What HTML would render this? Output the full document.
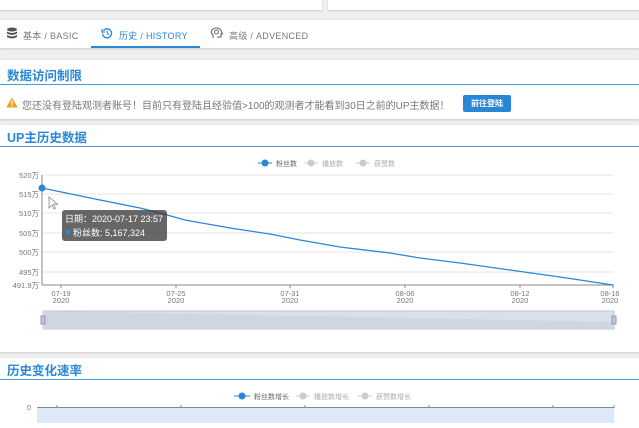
<!DOCTYPE html>
<html><head><meta charset="utf-8"><style>
*{margin:0;padding:0;box-sizing:border-box}
body{width:639px;height:423px;background:#efefef;position:relative;overflow:hidden;font-family:"Liberation Sans","Noto Sans CJK SC",sans-serif}
.abs{position:absolute}
.card{position:absolute;background:#fff;box-shadow:0 1px 2px rgba(0,0,0,.15)}
.title{position:absolute;left:7px;font-size:12.5px;font-weight:bold;color:#2a87d6}
.line{position:absolute;left:0;right:0;height:1px;background:#4a9be0}
.tab{position:absolute;top:29px;font-size:9px;color:#777;letter-spacing:.3px}
</style></head><body>
<div class="card" style="left:0;top:0;width:322px;height:10px"></div>
<div class="card" style="left:328px;top:0;width:311px;height:10px"></div>

<div class="card" style="left:0;top:20px;width:639px;height:28px"></div>
<svg class="abs" style="left:6px;top:27px" width="12" height="12" viewBox="0 0 12 12"><g fill="#555"><ellipse cx="6" cy="2.5" rx="5" ry="2"/><path d="M1 4.5q5 3 10 0v2q-5 3-10 0z"/><path d="M1 8q5 3 10 0v2q-5 3-10 0z"/></g></svg>
<div class="tab" style="left:23px">基本 / BASIC</div>
<svg class="abs" style="left:101px;top:27px" width="12" height="12" viewBox="0 0 12 12"><path d="M2.5 3.5A4.5 4.5 0 1 1 1.5 6.5" fill="none" stroke="#2a87d6" stroke-width="1.3"/><path d="M1 2v3h3" fill="none" stroke="#2a87d6" stroke-width="1.2"/><path d="M6.2 3.5v3l2 1.3" fill="none" stroke="#2a87d6" stroke-width="1.1"/></svg>
<div class="tab" style="left:119px;color:#2a87d6">历史 / HISTORY</div>
<div class="abs" style="left:91px;top:46px;width:109px;height:2px;background:#2a87d6"></div>
<svg class="abs" style="left:210px;top:27px" width="13" height="12" viewBox="0 0 13 12"><path d="M3 11V8Q1 6.5 1.5 4Q2.5 1 6.5 1Q11 1 11.5 5L12.5 7H11V10H8V11" fill="none" stroke="#666" stroke-width="1.1"/><circle cx="6.5" cy="5" r="2" fill="none" stroke="#666"/></svg>
<div class="tab" style="left:229px">高级 / ADVENCED</div>

<div class="card" style="left:0;top:60px;width:639px;height:59px">
<div class="title" style="top:5px">数据访问制限</div>
<div class="line" style="top:24px"></div>
<svg class="abs" style="left:6px;top:37px" width="12" height="11" viewBox="0 0 12 11"><path d="M6 0.5L11.7 10.5H0.3z" fill="#f0a020"/><rect x="5.4" y="3.5" width="1.2" height="4" fill="#fff"/><rect x="5.4" y="8.3" width="1.2" height="1.2" fill="#fff"/></svg>
<div class="abs" style="left:22px;top:37px;font-size:10px;color:#777;white-space:nowrap">您还没有登陆观测者账号！目前只有登陆且经验值&gt;100的观测者才能看到30日之前的UP主数据！</div>
<div class="abs" style="left:463px;top:35px;width:48px;height:17px;background:#2a87d6;border-radius:2px;color:#fff;font-size:8px;font-weight:bold;text-align:center;line-height:17px">前往登陆</div>
</div>

<div class="card" style="left:0;top:125px;width:639px;height:227px">
<div class="title" style="top:2px">UP主历史数据</div>
<div class="line" style="top:21px"></div>
</div>
<svg class="abs" style="left:0;top:150px" width="639" height="200" font-family="Liberation Sans,Noto Sans CJK SC,sans-serif">
<g font-size="7" fill="#aaa">
<line x1="258" y1="13" x2="272" y2="13" stroke="#2a87d6"/><circle cx="265" cy="13" r="3.5" fill="#2a87d6"/><text x="276" y="16" fill="#666">粉丝数</text>
<line x1="304" y1="13" x2="318" y2="13" stroke="#ccc"/><circle cx="311" cy="13" r="3.5" fill="#ccc"/><text x="322" y="16">播放数</text>
<line x1="356" y1="13" x2="370" y2="13" stroke="#ccc"/><circle cx="363" cy="13" r="3.5" fill="#ccc"/><text x="374" y="16">获赞数</text>
</g>
<g stroke="#e6e6e6"><line x1="42" y1="25" x2="613" y2="25"/><line x1="42" y1="44" x2="613" y2="44"/><line x1="42" y1="63" x2="613" y2="63"/><line x1="42" y1="83" x2="613" y2="83"/><line x1="42" y1="102" x2="613" y2="102"/><line x1="42" y1="122" x2="613" y2="122"/></g>
<line x1="42" y1="25" x2="42" y2="135" stroke="#888"/><line x1="42" y1="135" x2="614" y2="135" stroke="#888"/>
<g stroke="#888"><line x1="61" y1="135" x2="61" y2="138"/><line x1="176" y1="135" x2="176" y2="138"/><line x1="290" y1="135" x2="290" y2="138"/><line x1="405" y1="135" x2="405" y2="138"/><line x1="520" y1="135" x2="520" y2="138"/><line x1="613" y1="135" x2="613" y2="138"/></g>
<g font-size="7.5" fill="#777" text-anchor="end"><text x="39" y="28">520万</text><text x="39" y="47">515万</text><text x="39" y="66">510万</text><text x="39" y="86">505万</text><text x="39" y="105">500万</text><text x="39" y="125">495万</text><text x="39" y="138">491.9万</text></g>
<g font-size="7.5" fill="#777" text-anchor="middle"><text x="61" y="146">07-19</text><text x="61" y="153">2020</text><text x="176" y="146">07-25</text><text x="176" y="153">2020</text><text x="290" y="146">07-31</text><text x="290" y="153">2020</text><text x="405" y="146">08-06</text><text x="405" y="153">2020</text><text x="520" y="146">08-12</text><text x="520" y="153">2020</text><text x="610" y="146">08-16</text><text x="610" y="153">2020</text></g>
<polyline fill="none" stroke="#2a87d6" stroke-width="1.3" points="42,38 100,50 140,58 160,63 185,70 230,78 270,84 300,90 340,97 390,103 420,108 460,113 510,120 560,127 613,135"/>
<circle cx="42" cy="38" r="3.5" fill="#2a87d6"/>
<path d="M49 47v11l3-3 2 4 1.5-.8-2-4h4z" fill="#fff" stroke="#888" stroke-width=".8"/>
<rect x="62" y="60" width="105" height="31" rx="3" fill="rgba(60,60,60,.78)"/>
<text x="65" y="72" font-size="9" fill="#fff">日期：2020-07-17 23:57</text>
<circle cx="68" cy="82" r="2.5" fill="#2a87d6"/><text x="73" y="86" font-size="9" fill="#fff">粉丝数: 5,167,324</text>
<rect x="43" y="161" width="571" height="18" fill="#d8e0ea" stroke="#bbc6d4"/>
<path d="M43 161L614 172V179H43z" fill="#cdd6e1"/>
<rect x="41" y="166" width="4" height="8" fill="#bcc8d8" stroke="#99a"/>
<rect x="612" y="166" width="4" height="8" fill="#bcc8d8" stroke="#99a"/>
</svg>

<div class="card" style="left:0;top:358px;width:639px;height:70px">
<div class="title" style="top:2px">历史变化速率</div>
<div class="line" style="top:21px"></div>
</div>
<svg class="abs" style="left:0;top:385px" width="639" height="38" font-family="Liberation Sans,Noto Sans CJK SC,sans-serif">
<g font-size="7" fill="#aaa">
<line x1="234" y1="11" x2="250" y2="11" stroke="#2a87d6"/><circle cx="242" cy="11" r="3.5" fill="#2a87d6"/><text x="254" y="14" fill="#666">粉丝数增长</text>
<line x1="296" y1="11" x2="310" y2="11" stroke="#ccc"/><circle cx="303" cy="11" r="3.5" fill="#ccc"/><text x="314" y="14">播放数增长</text>
<line x1="358" y1="11" x2="372" y2="11" stroke="#ccc"/><circle cx="365" cy="11" r="3.5" fill="#ccc"/><text x="376" y="14">获赞数增长</text>
</g>
<rect x="37" y="23" width="577" height="15" fill="#dde9f7"/>
<line x1="37" y1="22.5" x2="614" y2="22.5" stroke="#888"/>
<g stroke="#888"><line x1="57" y1="20" x2="57" y2="23"/><line x1="181" y1="20" x2="181" y2="23"/><line x1="305" y1="20" x2="305" y2="23"/><line x1="429" y1="20" x2="429" y2="23"/><line x1="553" y1="20" x2="553" y2="23"/><line x1="614" y1="20" x2="614" y2="23"/></g>
<text x="31" y="25" font-size="7.5" fill="#777" text-anchor="end">0</text>
</svg>
</body></html>
